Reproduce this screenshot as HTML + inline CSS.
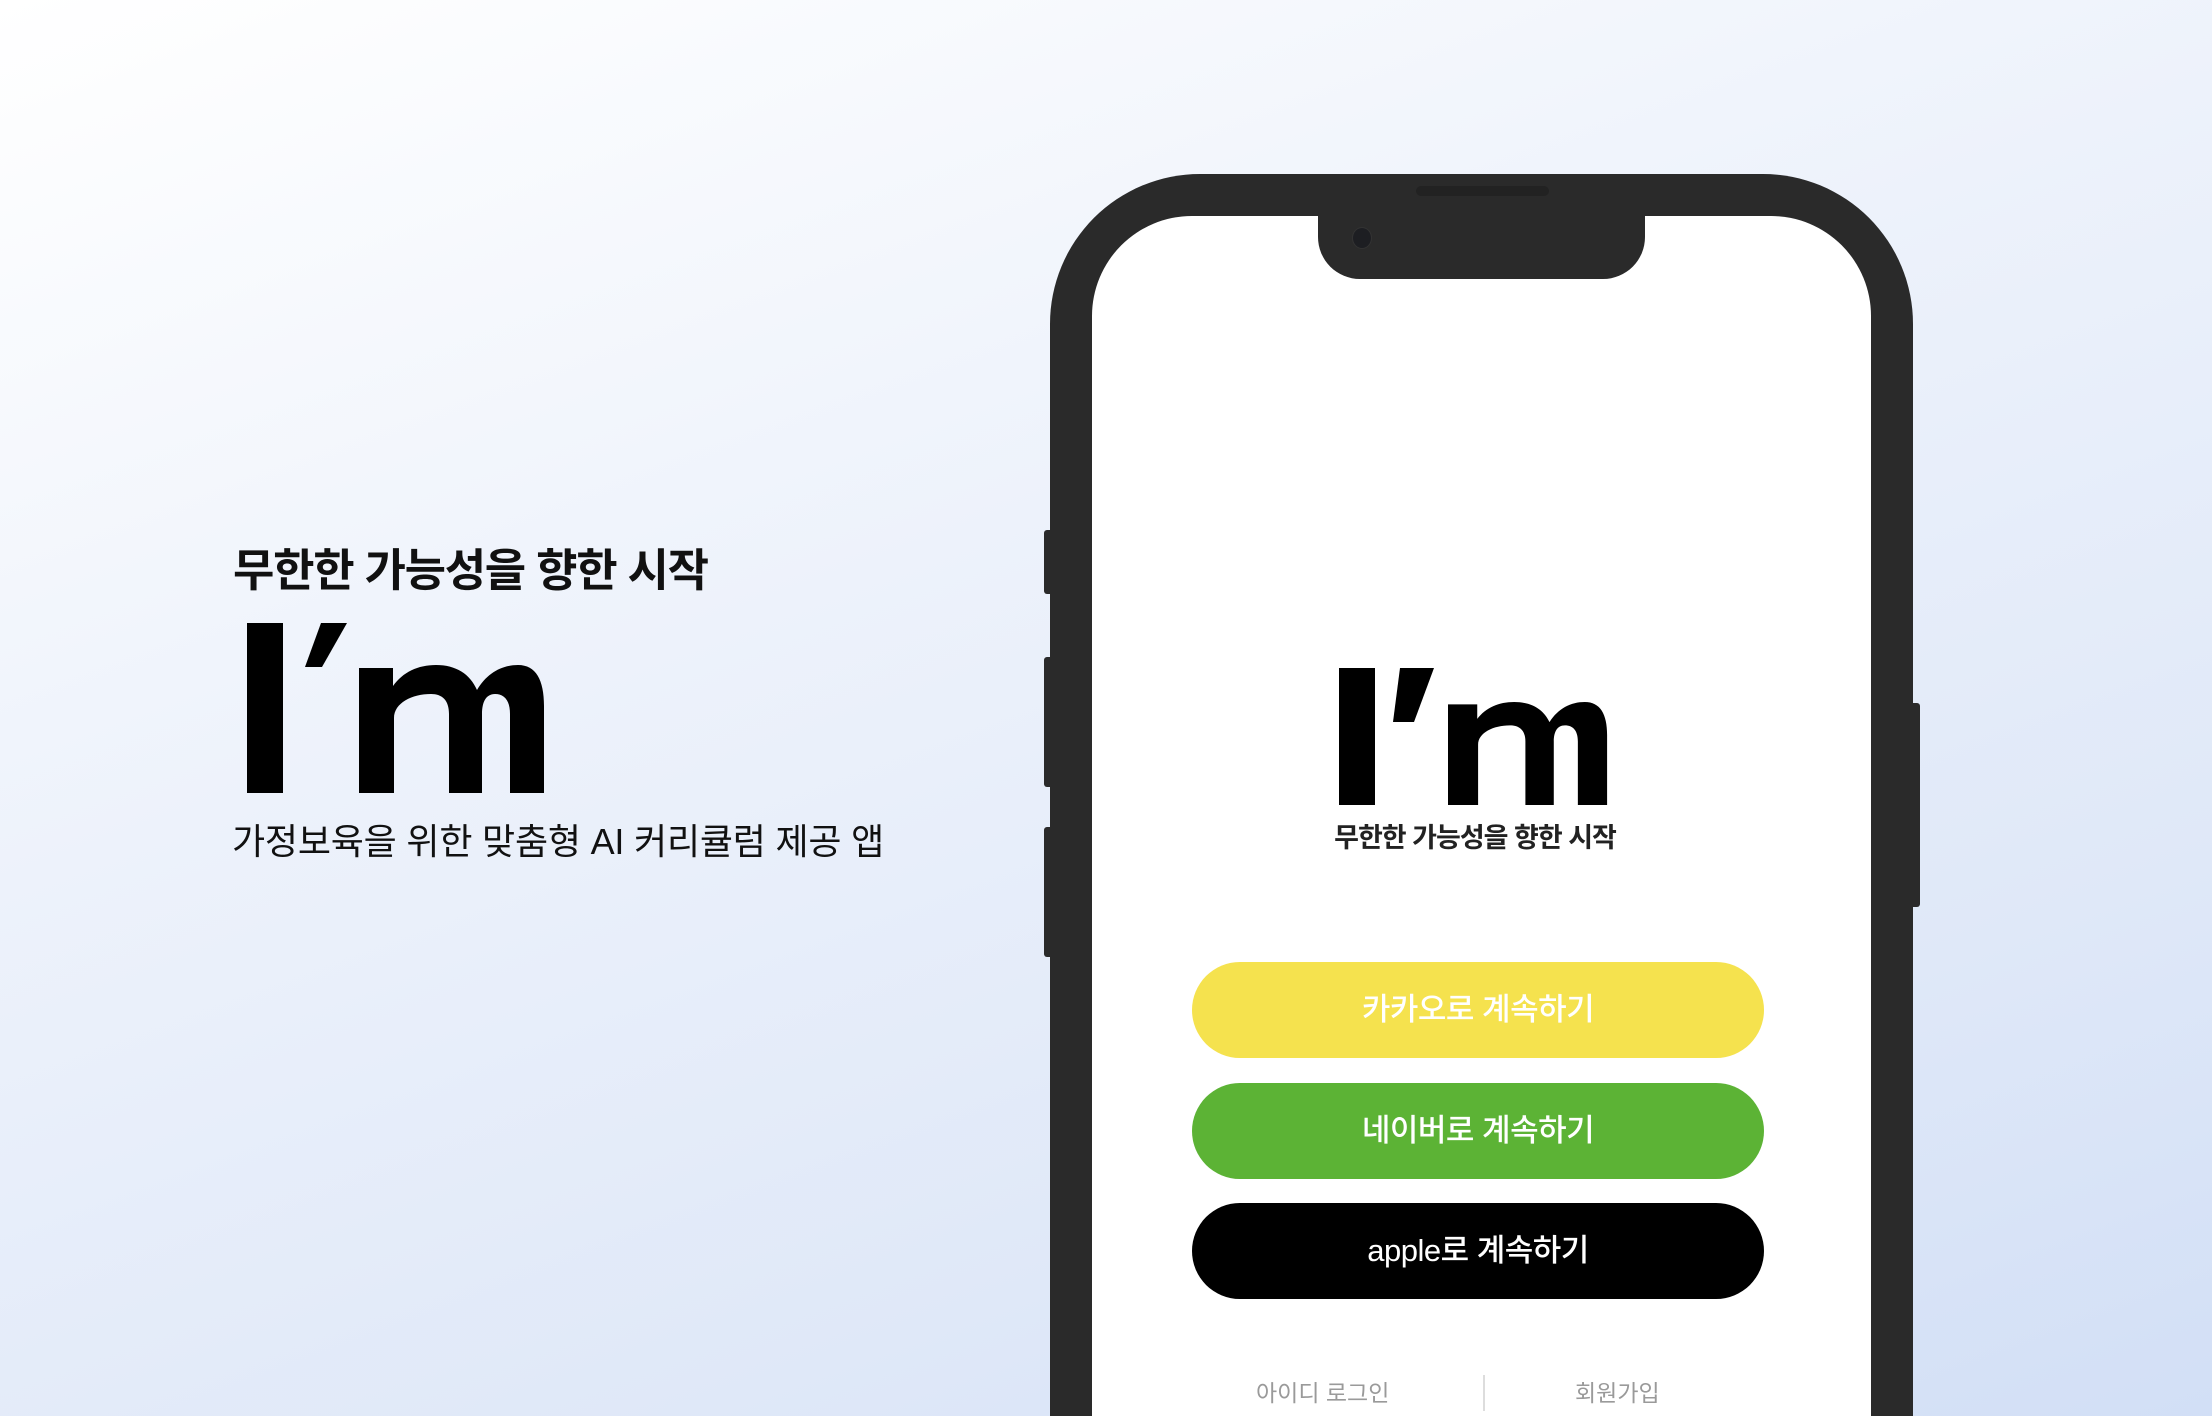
<!DOCTYPE html>
<html><head><meta charset="utf-8">
<style>
html{margin:0;padding:0;width:2212px;height:1416px;overflow:hidden}
body{margin:0;padding:0;width:2212px;height:1416px;position:relative;overflow:hidden;
background:linear-gradient(160deg,#ffffff 0%,#edf2fb 40%,#dfe8f8 75%,#d2dff6 100%);
font-family:"Liberation Sans","Noto Sans CJK KR",sans-serif;}
.abs{position:absolute}
.h1{left:233px;top:541px;font-size:45px;font-weight:700;color:#111;letter-spacing:-1.3px;white-space:nowrap;line-height:60px}
.sub{left:232px;top:817px;font-size:36px;font-weight:400;color:#111;letter-spacing:-0.2px;white-space:nowrap;line-height:50px}
.phone{left:1050px;top:174px;width:863px;height:1242px;background:#2a2a2a;border-radius:150px 150px 0 0}
.screen{left:1092px;top:216px;width:779px;height:1200px;background:#fff;border-radius:100px 100px 0 0}
.notch{left:1318px;top:200px;width:327px;height:79px;background:#2a2a2a;border-radius:0 0 42px 42px}
.speaker{left:1416px;top:186px;width:133px;height:10px;background:#222;border-radius:6px}
.cam{left:1352px;top:227px;width:18px;height:20px;background:#1d1e22;border-radius:50%;border:1px solid #333}
.btnside{background:#2a2a2a;border-radius:3px}
.btn{left:1192px;width:572px;height:96px;border-radius:48px;color:#fff;font-size:31px;text-align:center;line-height:96px;letter-spacing:-0.5px;font-weight:500}
.tag{left:1330px;top:816px;width:290px;text-align:center;font-size:27px;font-weight:700;color:#222;letter-spacing:-1px;white-space:nowrap}
.link{top:1378px;font-size:23px;color:#9a9a9a;white-space:nowrap;line-height:30px}
</style></head><body>
<div class="abs h1">무한한 가능성을 향한 시작</div>
<svg class="abs" style="left:0;top:0" width="700" height="820">
<rect x="247" y="623" width="36" height="170" fill="#000"/>
<polygon points="321,623 347,623 322,667 305,667" fill="#000"/>
<path d="M359,793 V668 H393 V686 C403,672 418,665 436,665 C456,665 470,674 477,690 C487,673 502,665 518,665 C536,665 544,680 544,706 V793 H510 V714 C510,700 504,694 495,694 C486,694 482,702 482,714 V793 H449 V714 C449,700 442,694 431,694 C412,694 394,703 394,718 V793 Z" fill="#000"/>
</svg>
<div class="abs sub">가정보육을 위한 맞춤형 AI 커리큘럼 제공 앱</div>

<div class="abs btnside" style="left:1044px;top:530px;width:10px;height:64px"></div>
<div class="abs btnside" style="left:1044px;top:657px;width:10px;height:130px"></div>
<div class="abs btnside" style="left:1044px;top:827px;width:10px;height:130px"></div>
<div class="abs btnside" style="left:1909px;top:703px;width:11px;height:204px"></div>
<div class="abs phone"></div>
<div class="abs screen"></div>
<div class="abs notch"></div>
<div class="abs speaker"></div>
<div class="abs cam"></div>

<svg class="abs" style="left:0;top:0" width="2212" height="900">
<rect x="1339" y="668" width="36" height="137" fill="#000"/>
<polygon points="1400,668 1434,668 1414,722 1393,722" fill="#000"/>
<g transform="translate(1448,702) scale(0.86,0.805) translate(-359,-665)">
<path d="M359,793 V668 H393 V686 C403,672 418,665 436,665 C456,665 470,674 477,690 C487,673 502,665 518,665 C536,665 544,680 544,706 V793 H510 V714 C510,700 504,694 495,694 C486,694 482,702 482,714 V793 H449 V714 C449,700 442,694 431,694 C412,694 394,703 394,718 V793 Z" fill="#000"/>
</g>
</svg>
<div class="abs tag">무한한 가능성을 향한 시작</div>

<div class="abs btn" style="top:962px;background:#f5e24e">카카오로 계속하기</div>
<div class="abs btn" style="top:1083px;background:#5cb335">네이버로 계속하기</div>
<div class="abs btn" style="top:1203px;background:#000">apple로 계속하기</div>

<div class="abs link" style="left:1256px">아이디 로그인</div>
<div class="abs" style="left:1483px;top:1375px;width:2px;height:36px;background:#ddd"></div>
<div class="abs link" style="left:1575px">회원가입</div>
</body></html>
